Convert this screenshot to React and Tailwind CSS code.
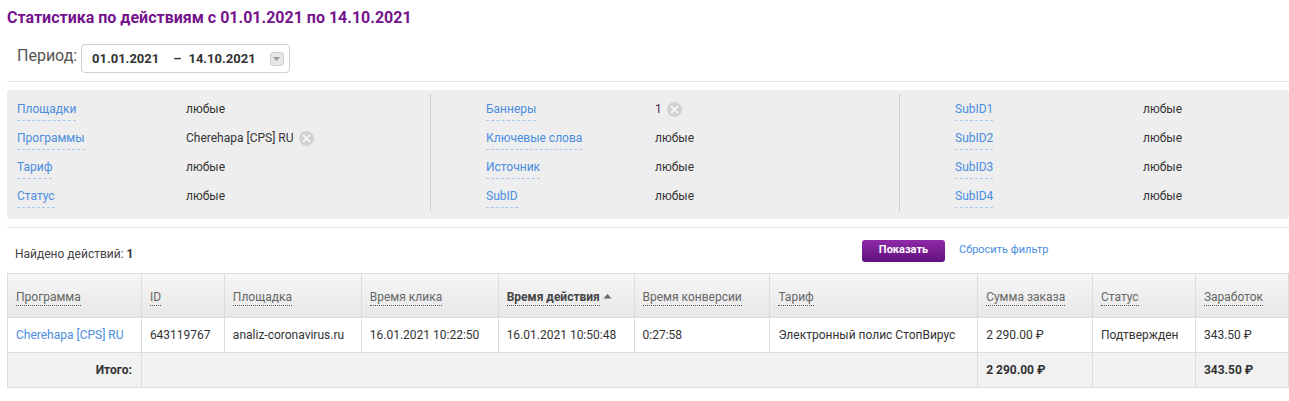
import React from "react";

const font = { fontFamily: "Roboto, 'Liberation Sans', sans-serif" };

function Clear() {
  return (
    <span className="ml-[5px] inline-flex h-[15px] w-[15px] items-center justify-center rounded-full bg-[#d2d2d2]">
      <svg width="9" height="9" viewBox="0 0 9 9">
        <path d="M1.5 1.5 L7.5 7.5 M7.5 1.5 L1.5 7.5" stroke="#fff" strokeWidth="1.4" strokeLinecap="round" />
      </svg>
    </span>
  );
}

function FilterRow({ label, value, valueW }) {
  return (
    <div className="flex h-[29px] items-start pt-[7px] text-[12px] leading-[15px]">
      <div style={{ width: valueW }} className="shrink-0">
        <span className="inline-block border-b border-dashed border-[#a8c8ee] pb-[3px] text-[#4a8de0]">
          {label}
        </span>
      </div>
      <div className="flex h-[15px] items-center text-[#333]">{value}</div>
    </div>
  );
}

function H({ children, bold, arrow }) {
  return (
    <span className="inline-flex items-center">
      <span
        className={
          "border-b border-dotted border-[#555] leading-[15px] " +
          (bold ? "font-bold text-[#444]" : "text-[#666]")
        }
      >
        {children}
      </span>
      {arrow && (
        <svg width="9" height="6" viewBox="0 0 9 6" className="ml-[3px] mb-[3px]">
          <path d="M0.5 5.5 L4.5 1 L8.5 5.5 Z" fill="#666" />
        </svg>
      )}
    </span>
  );
}

export default function App() {
  const cols = [134, 83, 137, 137, 136, 136, 208, 115, 103, 93];
  const headers = [
    ["Программа"],
    ["ID"],
    ["Площадка"],
    ["Время клика"],
    ["Время действия", true, true],
    ["Время конверсии"],
    ["Тариф"],
    ["Сумма заказа"],
    ["Статус"],
    ["Заработок"],
  ];
  const row = [
    "643119767",
    "analiz-coronavirus.ru",
    "16.01.2021 10:22:50",
    "16.01.2021 10:50:48",
    "0:27:58",
    "Электронный полис СтопВирус",
    "2 290.00 ₽",
    "Подтвержден",
    "343.50 ₽",
  ];
  return (
    <div style={font} className="w-[1289px] bg-white pl-[7px] text-[#333]">
      <div className="pt-[7px] h-[36px] text-[16px] font-bold leading-[22px] text-[#74138c]">
        Статистика по действиям с 01.01.2021 по 14.10.2021
      </div>

      <div className="flex h-[45px] items-start pt-[8px]">
        <div className="w-[74px] pl-[10px] pt-[2px] text-[16px] text-[#555] leading-[20px]">Период:</div>
        <div className="flex h-[29px] w-[209px] shrink-0 items-center rounded-[4px] border border-[#cfcfcf] pl-[10px] text-[13px] font-bold text-[#333]">
          <span>01.01.2021</span>
          <span className="ml-[14px]">–</span>
          <span className="ml-[7px]">14.10.2021</span>
          <span className="ml-[14px] flex h-[14px] w-[14px] items-center justify-center rounded-[3px] border border-[#d0d0d0] bg-[#e6e6e6]">
            <svg width="7" height="4" viewBox="0 0 7 4">
              <path d="M0 0 L7 0 L3.5 4 Z" fill="#999" />
            </svg>
          </span>
        </div>
      </div>

      <div className="h-px bg-[#e2e2e2]" />

      <div className="mt-[8px] flex rounded-[4px] bg-[#eeeeee] pt-[5px] pb-[8px]">
        <div className="w-[423px] pl-[10px]">
          <FilterRow label="Площадки" value="любые" valueW={169} />
          <FilterRow
            label="Программы"
            value={
              <>
                Cherehapa [CPS] RU
                <Clear />
              </>
            }
            valueW={169}
          />
          <FilterRow label="Тариф" value="любые" valueW={169} />
          <FilterRow label="Статус" value="любые" valueW={169} />
        </div>
        <div className="w-[469px] border-l border-dotted border-[#b5b5b5] pl-[55px]">
          <FilterRow
            label="Баннеры"
            value={
              <>
                <span className="text-[#5a1f4a]">1</span>
                <Clear />
              </>
            }
            valueW={169}
          />
          <FilterRow label="Ключевые слова" value="любые" valueW={169} />
          <FilterRow label="Источник" value="любые" valueW={169} />
          <FilterRow label="SubID" value="любые" valueW={169} />
        </div>
        <div className="flex-1 border-l border-dotted border-[#b5b5b5] pl-[55px]">
          <FilterRow label="SubID1" value="любые" valueW={188} />
          <FilterRow label="SubID2" value="любые" valueW={188} />
          <FilterRow label="SubID3" value="любые" valueW={188} />
          <FilterRow label="SubID4" value="любые" valueW={188} />
        </div>
      </div>

      <div className="mt-[8px] h-px bg-[#e2e2e2]" />

      <div className="flex h-[45px] items-center">
        <div className="w-[855px] pl-[8px] pt-[6px] text-[12px] text-[#444]">
          Найдено действий: <span className="font-bold text-[#333]">1</span>
        </div>
        <button className="h-[22px] w-[83px] rounded-[3px] bg-gradient-to-b from-[#8f2aa8] to-[#62107e] text-[11px] font-bold text-white">
          Показать
        </button>
        <span className="ml-[14px] text-[11px] text-[#4a8de0]">Сбросить фильтр</span>
      </div>

      <table className="border-collapse text-[12px]" style={{ width: 1282 }}>
        <colgroup>
          {cols.map((w, i) => (
            <col key={i} style={{ width: w }} />
          ))}
        </colgroup>
        <thead>
          <tr className="h-[44px] bg-gradient-to-b from-[#f6f6f6] to-[#e7e7e7]">
            {headers.map(([t, b, a], i) => (
              <th key={i} className="border border-[#dcdcdc] px-[8px] pt-[2px] text-left font-normal">
                <H bold={b} arrow={a}>{t}</H>
              </th>
            ))}
          </tr>
        </thead>
        <tbody>
          <tr className="h-[35px] bg-white">
            <td className="border border-[#dcdcdc] px-[8px] text-[#4a8de0]">Cherehapa [CPS] RU</td>
            {row.map((c, i) => (
              <td key={i} className="border border-[#dcdcdc] px-[8px] text-[#333]">
                {c}
              </td>
            ))}
          </tr>
          <tr className="h-[35px] bg-[#f1f1f1] font-bold text-[#333]">
            <td className="border border-[#dcdcdc] px-[9px] text-right">Итого:</td>
            <td colSpan={6} className="border border-[#dcdcdc]" />
            <td className="border border-[#dcdcdc] px-[8px]">2 290.00 ₽</td>
            <td className="border border-[#dcdcdc]" />
            <td className="border border-[#dcdcdc] px-[8px]">343.50 ₽</td>
          </tr>
        </tbody>
      </table>
    </div>
  );
}
